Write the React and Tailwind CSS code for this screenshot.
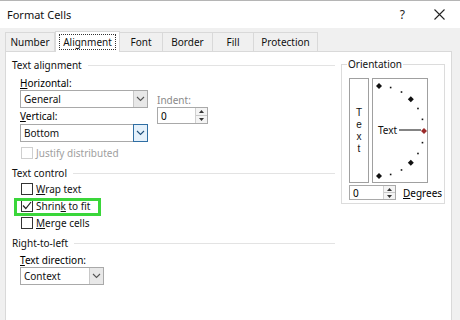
import React from "react";

const font = { fontFamily: '"Noto Sans", "Open Sans", sans-serif' };

const Chevron = ({ color = "#333" }) => (
  <svg width="9" height="6" viewBox="0 0 9 6">
    <polyline points="1,1 4.5,4.5 8,1" fill="none" stroke={color} strokeWidth="1.1" />
  </svg>
);

const Combo = ({ value, width, focused }) => (
  <div className={`flex h-[18px] border border-[#a9a9a9] bg-white ${width}`}>
    <div className="flex-1 flex items-center pl-[3px] text-[#111]">{value}</div>
    {focused ? (
      <div className="w-[15px] -my-px -mr-px border border-[#2f6ea3] bg-[#e5f1fb] flex items-center justify-center">
        <Chevron color="#1f4f7a" />
      </div>
    ) : (
      <div className="w-[14px] border-l border-[#c8c8c8] bg-[#e8e8e8] flex items-center justify-center">
        <Chevron color="#555" />
      </div>
    )}
  </div>
);

const Spinner = ({ value, width, height }) => (
  <div className={`flex border border-[#a9a9a9] bg-white ${width} ${height}`}>
    <div className="flex-1 flex items-center pl-[3px]">{value}</div>
    <div className="w-[12px] border-l border-[#d0d0d0] bg-[#f4f4f4] flex flex-col">
      <div className="flex-1 flex items-center justify-center border-b border-[#c8c8c8]">
        <svg width="5" height="3" viewBox="0 0 5 3"><polygon points="0,3 2.5,0 5,3" fill="#333" /></svg>
      </div>
      <div className="flex-1 flex items-center justify-center">
        <svg width="5" height="3" viewBox="0 0 5 3"><polygon points="0,0 2.5,3 5,0" fill="#333" /></svg>
      </div>
    </div>
  </div>
);

const Check = ({ checked, disabled, u, rest, pre = "" }) => (
  <div className="flex items-center h-[17px] pl-[9px] gap-[3px]">
    <div className={`w-[12px] h-[12px] border bg-white flex items-center justify-center ${disabled ? "border-[#cfcfcf]" : "border-[#333]"}`}>
      {checked && (
        <svg width="10" height="9" viewBox="0 0 10 9">
          <polyline points="1,4.5 3.8,7.5 9,1" fill="none" stroke="#222" strokeWidth="1.2" />
        </svg>
      )}
    </div>
    <span className={disabled ? "text-[#a0a0a0]" : "text-[#111]"}>
      {pre}
      {u && <span className="underline">{u}</span>}
      {rest}
    </span>
  </div>
);

const Header = ({ children }) => (
  <div className="flex items-center gap-[6px] h-[14px]">
    <span className="text-[#111]">{children}</span>
    <div className="flex-1 h-px bg-[#e3e3e3]" />
  </div>
);

const tabs = [
  ["Number", "w-[50px]"],
  ["Alignment", "w-[65px]"],
  ["Font", "w-[43px]"],
  ["Border", "w-[50px]"],
  ["Fill", "w-[41px]"],
  ["Protection", "w-[64px]"],
];

const Dial = () => {
  const pts = [];
  for (let a = -90; a <= 90; a += 15) {
    const r = (a * Math.PI) / 180;
    pts.push({ a, x: 6 + 45 * Math.cos(r), y: 52 - 45 * Math.sin(r) });
  }
  return (
    <svg width="54" height="103" viewBox="0 0 54 103">
      {pts.map((p) =>
        p.a % 45 === 0 ? (
          <polygon
            key={p.a}
            points={`${p.x},${p.y - 3} ${p.x + 3},${p.y} ${p.x},${p.y + 3} ${p.x - 3},${p.y}`}
            fill={p.a === 0 ? "#9b2a2a" : "#111"}
          />
        ) : (
          <rect key={p.a} x={p.x - 0.8} y={p.y - 0.8} width="1.6" height="1.6" fill="#111" />
        )
      )}
      <line x1="26" y1="51" x2="48" y2="51" stroke="#333" strokeWidth="1.2" />
      <text x="5" y="55" fontSize="10" fill="#111" style={font}>Text</text>
    </svg>
  );
};

export default function App() {
  return (
    <div className="w-[460px] h-[320px] bg-[#f0f0f0] overflow-hidden flex flex-col text-[10px] leading-none" style={font}>
      <div className="h-[28px] shrink-0 bg-white border-t border-[#b5b5b5] flex items-center pl-[7px] pr-[15px]">
        <span className="text-[11px] text-[#111]">Format Cells</span>
        <span className="ml-auto text-[12px] text-[#222]">?</span>
        <svg className="ml-[29px]" width="11" height="11" viewBox="0 0 11 11">
          <path d="M0.5 0.5 L10.5 10.5 M10.5 0.5 L0.5 10.5" stroke="#222" strokeWidth="1.1" />
        </svg>
      </div>

      <div className="flex items-end h-[23px] shrink-0 pl-[5px] relative z-10">
        {tabs.map(([t, w]) =>
          t === "Alignment" ? (
            <div key={t} className={`${w} h-[21px] -mb-px bg-white border border-b-0 border-[#d9d9d9] flex items-center justify-center`}>
              <span className="border border-dotted border-[#333] px-[3px] py-[2px] text-[#111]">{t}</span>
            </div>
          ) : (
            <div key={t} className={`${w} h-[19px] border-t border-r border-[#d9d9d9] flex items-center justify-center text-[#111] first:border-l`}>
              {t}
            </div>
          )
        )}
      </div>

      <div className="h-[300px] shrink-0 ml-[5px] mr-[8px] bg-white border border-[#d9d9d9] flex pl-[6px] pt-[6px]">
        <div className="w-[323px] flex flex-col">
          <Header>Text alignment</Header>
          <div className="flex pl-[8px] mt-[3px]">
            <div className="flex flex-col">
              <div className="h-[15px] flex items-center"><span><span className="underline">H</span>orizontal:</span></div>
              <Combo value="General" width="w-[128px]" />
              <div className="h-[16px] flex items-center"><span><span className="underline">V</span>ertical:</span></div>
              <Combo value="Bottom" width="w-[128px]" focused />
            </div>
            <div className="flex flex-col ml-[9px] pt-[18px]">
              <div className="h-[14px] flex items-center text-[#8a8a8a]">Indent:</div>
              <Spinner value="0" width="w-[51px]" height="h-[17px]" />
            </div>
          </div>
          <div className="mt-[2px]">
            <Check disabled pre="Justify distributed" />
          </div>

          <div className="mt-[5px]">
            <Header>Text control</Header>
          </div>
          <Check u="W" rest="rap text" />
          <div className="relative">
            <Check checked pre="Shrin" u="k" rest=" to fit" />
            <div className="absolute left-[2px] top-[1px] w-[87px] h-[18px] border-[3px] border-[#3ad63a]" />
          </div>
          <Check u="M" rest="erge cells" />

          <div className="mt-[5px]">
            <Header>Right-to-left</Header>
          </div>
          <div className="pl-[8px] mt-[3px]">
            <div className="h-[14px] flex items-center"><span><span className="underline">T</span>ext direction:</span></div>
            <Combo value="Context" width="w-[84px]" />
          </div>
        </div>

        <div className="ml-[6px] mt-[6px] w-[104px] h-[140px] border border-[#dcdcdc] relative pl-[7px] pt-[13px]">
          <span className="absolute left-[5px] -top-[6px] bg-white px-[1px] text-[#111]">Orientation</span>
          <div className="flex gap-[3px]">
            <div className="w-[20px] h-[105px] border border-[#a0a0a0] flex flex-col items-center justify-center text-[#111] text-[10px] font-['Liberation_Sans',sans-serif]">
              <span className="block h-[12px] leading-[12px]">T</span>
              <span className="block h-[12px] leading-[12px]">e</span>
              <span className="block h-[12px] leading-[12px]">x</span>
              <span className="block h-[12px] leading-[12px]">t</span>
            </div>
            <div className="w-[56px] h-[105px] border border-[#a0a0a0]">
              <Dial />
            </div>
          </div>
          <div className="flex items-center mt-[2px] gap-[7px]">
            <Spinner value="0" width="w-[47px]" height="h-[15px]" />
            <span><span className="underline">D</span>egrees</span>
          </div>
        </div>
      </div>
    </div>
  );
}
